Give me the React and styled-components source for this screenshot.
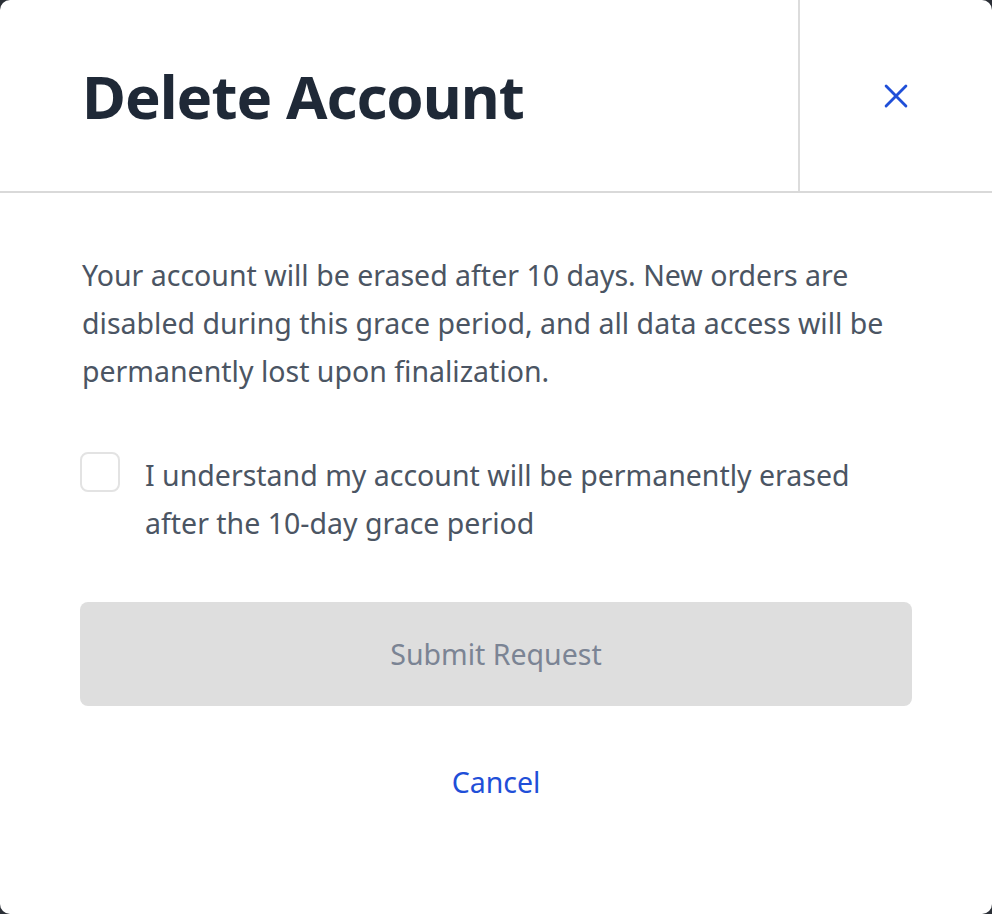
import React, { useState } from "react";
import styled, { createGlobalStyle } from "styled-components";

const GlobalStyle = createGlobalStyle`
  html, body {
    margin: 0;
    padding: 0;
    background: #2b2f36;
  }
  body {
    font-family: "Noto Sans", "Open Sans", Arial, sans-serif;
  }
  * {
    box-sizing: border-box;
  }
`;

function CloseIcon() {
  return (
    <svg width="34" height="34" viewBox="0 0 24 24" fill="none">
      <path
        d="M5 5L19 19M19 5L5 19"
        stroke="#1f4fd8"
        strokeWidth="2"
        strokeLinecap="round"
      />
    </svg>
  );
}

function App() {
  const [checked, setChecked] = useState(false);

  return (
    <>
      <GlobalStyle />
      <Modal>
        <Header>
          <Title>Delete Account</Title>
          <CloseButton aria-label="Close">
            <CloseIcon />
          </CloseButton>
        </Header>
        <Body>
          <Description>
            Your account will be erased after 10 days. New orders are disabled
            during this grace period, and all data access will be permanently
            lost upon finalization.
          </Description>
          <CheckRow>
            <CheckBox
              type="checkbox"
              checked={checked}
              onChange={(e) => setChecked(e.target.checked)}
            />
            <CheckLabel>
              I understand my account will be permanently erased after the
              10-day grace period
            </CheckLabel>
          </CheckRow>
          <SubmitButton disabled={!checked}>Submit Request</SubmitButton>
          <CancelLink>Cancel</CancelLink>
        </Body>
      </Modal>
    </>
  );
}

export default App;

const Modal = styled.div`
  width: 992px;
  height: 914px;
  background: #ffffff;
  border-radius: 10px;
  display: flex;
  flex-direction: column;
  overflow: hidden;
`;

const Header = styled.div`
  display: flex;
  height: 193px;
  flex-shrink: 0;
  border-bottom: 2px solid #d9d9d9;
`;

const Title = styled.h1`
  flex: 1;
  margin: 0;
  padding-left: 82px;
  display: flex;
  align-items: center;
  font-size: 60px;
  font-weight: 700;
  letter-spacing: -1px;
  color: #1f2937;
`;

const CloseButton = styled.button`
  width: 194px;
  border: none;
  border-left: 2px solid #dcdcdc;
  background: transparent;
  display: flex;
  align-items: center;
  justify-content: center;
  padding: 0;
  cursor: pointer;
`;

const Body = styled.div`
  padding: 58px 80px 0 80px;
  display: flex;
  flex-direction: column;
`;

const Description = styled.p`
  margin: 0 0 0 2px;
  font-size: 28.5px;
  line-height: 48px;
  color: #4b5563;
`;

const CheckRow = styled.label`
  display: flex;
  align-items: flex-start;
  gap: 25px;
  margin-top: 56px;
  cursor: pointer;
`;

const CheckBox = styled.input`
  appearance: none;
  flex-shrink: 0;
  width: 40px;
  height: 40px;
  margin: 1px 0 0 0;
  border: 2px solid #e3e3e3;
  border-radius: 8px;
  background: #ffffff;
  cursor: pointer;
`;

const CheckLabel = styled.span`
  max-width: 740px;
  font-size: 28.5px;
  line-height: 48px;
  color: #4b5563;
`;

const SubmitButton = styled.button`
  margin-top: 55px;
  height: 104px;
  width: 100%;
  flex-shrink: 0;
  border: none;
  border-radius: 8px;
  background: ${(p) => (p.disabled ? "#dedede" : "#1f4fd8")};
  color: ${(p) => (p.disabled ? "#7b8494" : "#ffffff")};
  font-family: inherit;
  font-size: 28.5px;
  cursor: ${(p) => (p.disabled ? "default" : "pointer")};
`;

const CancelLink = styled.button`
  align-self: center;
  margin-top: 52px;
  border: none;
  background: transparent;
  padding: 0;
  font-family: inherit;
  font-size: 28.5px;
  line-height: 48px;
  color: #1f4fd8;
  cursor: pointer;
`;
